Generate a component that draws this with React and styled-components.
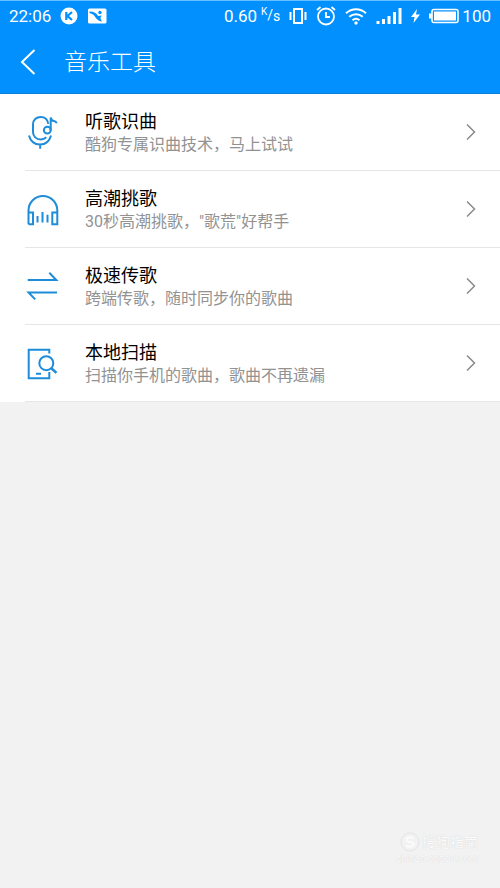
import React from 'react'
import styled, { createGlobalStyle } from 'styled-components'

const GlobalStyle = createGlobalStyle`
  body {
    margin: 0;
    background: #f2f2f2;
    font-family: Roboto, "Noto Sans CJK SC", sans-serif;
  }
`

const Page = styled.div`
  display: flex;
  flex-direction: column;
  min-height: 100vh;
`

const Header = styled.header`
  background: #0190fe;
  color: white;
  border-top: 1px solid #66bfff;
  border-bottom: 1px solid #0a80dc;
`

const StatusBar = styled.div`
  display: flex;
  justify-content: space-between;
  align-items: center;
  height: 30px;
  padding: 0 9px;
  font-size: 17px;
`

const StatusGroup = styled.div`
  display: flex;
  align-items: center;
  gap: ${({ $gap }) => $gap}px;

  & svg {
    display: block;
  }
`

const Speed = styled.span`
  display: flex;
  align-items: center;
  gap: 4px;
`

const Unit = styled.span`
  display: flex;
  font-size: 14px;
  line-height: 16px;

  & sup {
    font-size: 10px;
    line-height: 10px;
    vertical-align: top;
  }

  & sub {
    font-size: 14px;
    line-height: 18px;
    vertical-align: baseline;
  }
`

const TitleBar = styled.div`
  display: flex;
  align-items: center;
  height: 62px;
  padding-left: 18px;
  gap: 26px;
`

const BackButton = styled.button`
  display: flex;
  padding: 0;
  border: none;
  background: transparent;
  color: white;
  cursor: pointer;
`

const Title = styled.h1`
  margin: 0;
  padding-top: 1px;
  font-size: 23px;
  font-weight: 300;
  line-height: 32px;
`

const List = styled.ul`
  margin: 0;
  padding: 0 0 0 25px;
  list-style: none;
  background: white;
`

const ListItem = styled.li`
  border-bottom: 1px solid #e6e6e6;
`

const ItemLink = styled.a`
  display: flex;
  align-items: center;
  padding: 13px 23px 14px 0;
  color: #000;
  text-decoration: none;
`

const ItemIcon = styled.svg`
  flex: none;
  width: 34px;
  height: 34px;
  margin: 0 25px 0 1px;
  fill: none;
  stroke: #1e8cd8;
  stroke-width: 2;
`

const ItemText = styled.span`
  flex: 1;
  display: flex;
  flex-direction: column;
  padding-top: 3px;
`

const ItemName = styled.span`
  font-size: 18px;
  line-height: 24px;
`

const ItemInfo = styled.span`
  font-size: 16px;
  line-height: 22px;
  color: #929292;
`

const Watermark = styled.footer`
  display: flex;
  flex-direction: column;
  align-items: flex-end;
  margin-top: auto;
  padding: 0 22px 22px 0;
  color: #fbfbfb;
  font-size: 14px;
  line-height: 20px;
  text-shadow: 0 0 1px #ccc;
`

const Brand = styled.span`
  display: flex;
  align-items: center;
  gap: 2px;
`

const Site = styled.span`
  font-size: 10px;
  line-height: 14px;
`

const MicIcon = () => (
  <ItemIcon viewBox="0 0 34 34">
    <path d="M22.3 8.8C21.600 4.500 18.600 2 14.700 2 10.300 2 7 5 7 9.300v7.700c0 4.300 3.300 7.500 7.700 7.500 2.300 0 4.200-.8 5.600-2.200" />
    <circle cx="21.3" cy="15.2" r="3.4" />
    <path d="M24.7 15.2V2.500c.4 2.600 1.500 3.300 3.300 3.500 1.500.3 2.300 1 2.700 2.200" />
    <path d="M3 20.500c1.500 5.700 5.800 9 11 9s9.500-3.300 11-9M14.200 29.500v4.200" />
  </ItemIcon>
)

const HeadphonesIcon = () => (
  <ItemIcon viewBox="0 0 34 34">
    <path d="M2.500 32.300V18.500a14.400 14.600 0 0 1 28.800 0v13.800h-5V20.500h5M2.500 20.500H7v11.800H2.500" />
    <path d="M11.500 24v6.500M16.500 20v10.500M21.500 22.700v7.800" />
  </ItemIcon>
)

const TransferIcon = () => (
  <ItemIcon viewBox="0 0 34 34">
    <path d="M1.700 11h28.600L23.300 3.800M31 23.500H2.500l6.700 6.900" />
  </ItemIcon>
)

const ScanIcon = () => (
  <ItemIcon viewBox="0 0 34 34">
    <path d="M23.300 7.500V3.800H2.700v28.500h20.600V26M10 27.700h5" />
    <circle cx="20.300" cy="17.200" r="7" />
    <path d="M25.300 22.200l5.200 4.700" strokeWidth="2.600" />
  </ItemIcon>
)

const Arrow = () => (
  <svg width="12" height="18" viewBox="0 0 12 18" fill="none" stroke="#8a8a8a" strokeWidth="1.500">
    <path d="M2 1.500l7.500 7.500L2 16.500" />
  </svg>
)

const tools = [
  { name: '听歌识曲', info: '酷狗专属识曲技术，马上试试', Icon: MicIcon },
  { name: '高潮挑歌', info: '30秒高潮挑歌，"歌荒"好帮手', Icon: HeadphonesIcon },
  { name: '极速传歌', info: '跨端传歌，随时同步你的歌曲', Icon: TransferIcon },
  { name: '本地扫描', info: '扫描你手机的歌曲，歌曲不再遗漏', Icon: ScanIcon },
]

const PhoneStatus = () => (
  <StatusBar>
    <StatusGroup $gap={9}>
      <span>22:06</span>
      <svg width="18" height="18" viewBox="0 0 18 18">
        <circle cx="9" cy="9" r="8.500" fill="white" />
        <path d="M6.300 5v8M12 5L7.500 9l4.500 4" fill="none" stroke="#0190fe" strokeWidth="2.200" />
      </svg>
      <svg width="20" height="16" viewBox="0 0 20 16">
        <rect x="1" y="0.500" width="18.500" height="15" rx="1.500" fill="white" />
        <path d="M2.500 3.500c4.500 0 7 1.500 8.500 4.500l4-.5c-2 1.500-2 3 0 6-4.500-.5-6-3.500-7.500-5.500C6 6 4.500 5.500 2.500 5.200z" fill="#0190fe" />
        <circle cx="13" cy="4.500" r="1.700" fill="#0190fe" />
      </svg>
    </StatusGroup>
    <StatusGroup $gap={9}>
      <Speed>
        0.60
        <Unit><sup>K</sup>/<sub>s</sub></Unit>
      </Speed>
      <svg width="18" height="18" viewBox="0 0 18 18" fill="none" stroke="white" strokeWidth="2">
        <path d="M5 2h8v14H5zM1.500 5v8M16.500 5v8" />
      </svg>
      <svg width="20" height="20" viewBox="0 0 20 20" fill="none" stroke="white" strokeWidth="1.800">
        <circle cx="10" cy="10.500" r="8" />
        <path d="M10 6v5h4M1 4l3.500-3M19 4l-3.500-3" />
      </svg>
      <svg width="22" height="18" viewBox="0 0 22 18" fill="none" stroke="white" strokeWidth="2">
        <path d="M1 6.200c6-5.300 14-5.300 20 0M4.300 9.800c4-3.500 9.400-3.500 13.400 0M7.500 13.200c2.200-1.800 4.800-1.800 7 0" />
        <circle cx="11" cy="16" r="1.700" fill="white" stroke="none" />
      </svg>
      <svg width="26" height="16" viewBox="0 0 26 16" fill="none" stroke="white" strokeWidth="3">
        <path d="M2 16v-3M7.500 16v-5M13 16V8M18.500 16V4M24 16V0" />
      </svg>
      <svg width="9" height="14" viewBox="0 0 9 14" fill="white">
        <path d="M6 0L0 8h3.500L2.500 14 9 5.500H5z" />
      </svg>
      <StatusGroup $gap={3}>
        <svg width="30" height="16" viewBox="0 0 30 16">
          <rect x="3" y="1.500" width="26" height="13" rx="2" fill="none" stroke="white" strokeWidth="1.600" />
          <rect x="5" y="3.500" width="22" height="9" fill="white" />
          <path d="M0 5.500h2.500v5H0z" fill="white" />
        </svg>
        <span>100</span>
      </StatusGroup>
    </StatusGroup>
  </StatusBar>
)

const App = () => {
  return (
    <Page>
      <GlobalStyle />
      <Header>
        <PhoneStatus />
        <TitleBar>
          <BackButton aria-label="返回">
            <svg width="20" height="28" viewBox="0 0 20 28" fill="none" stroke="white" strokeWidth="2">
              <path d="M16.500 2L4 14l12.500 12" />
            </svg>
          </BackButton>
          <Title>音乐工具</Title>
        </TitleBar>
      </Header>
      <List>
        {tools.map(({ name, info, Icon }) => (
          <ListItem key={name}>
            <ItemLink href="#">
              <Icon />
              <ItemText>
                <ItemName>{name}</ItemName>
                <ItemInfo>{info}</ItemInfo>
              </ItemText>
              <Arrow />
            </ItemLink>
          </ListItem>
        ))}
      </List>
      <Watermark>
        <Brand>
          <svg width="20" height="20" viewBox="0 0 20 20" fill="none" stroke="#fbfbfb" strokeWidth="2">
            <circle cx="10" cy="10" r="9" stroke="#e4e4e4" strokeWidth="1" />
            <path d="M14 6.500c-2-1.500-7.500-1.500-7.500 1.300 0 3 7.500 1.400 7.500 4.400 0 2.800-6 2.800-8 1" />
          </svg>
          搜狗指南
        </Brand>
        <Site>zhinan.sogou.com</Site>
      </Watermark>
    </Page>
  )
}

export default App
